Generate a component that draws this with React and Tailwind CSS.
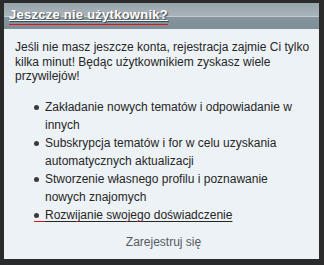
import React from 'react';

const perks = [
    'Zakładanie nowych tematów i odpowiadanie w innych',
    'Subskrypcja tematów i for w celu uzyskania automatycznych aktualizacji',
    'Stworzenie własnego profilu i poznawanie nowych znajomych',
];

const Bullet = () => (
    <span className="mt-[7px] mr-[6px] w-[5px] h-[5px] rounded-full bg-[#3a3a3a] shrink-0" />
);

export default function App() {
    return (
        <div className="w-[324px] h-[265px] bg-[#2b2b2b] pt-[3px] pl-[4px] pr-[5px] pb-[6px] font-['Liberation_Sans',Arial,sans-serif]">
            <div className="h-full flex flex-col bg-[#edf2f6]">
                <div className="h-[26px] flex flex-col shrink-0">
                    <div className="h-[13px] bg-gradient-to-b from-[#97a3ab] to-[#a9b3ba]" />
                    <div className="h-px bg-[#c3cbd0]" />
                    <div className="flex-1 bg-gradient-to-b from-[#84959d] to-[#7d8e96]" />
                </div>
                <div className="-mt-[24px] h-[24px] pl-[5px] flex items-start">
                    <span className="mt-[2px] pb-px border-b border-[#e0141e] text-[13px] font-bold tracking-[0.25px] leading-[16px] text-white underline decoration-white underline-offset-[1px] [text-shadow:1px_1px_1px_#3b4a52]">
                        Jeszcze nie użytkownik?
                    </span>
                </div>

                <div className="pt-[11px] pl-[11px] pr-[7px] text-[12px] text-[#262626]">
                    <p className="leading-[14.5px]">
                        Jeśli nie masz jeszcze konta, rejestracja zajmie Ci tylko kilka minut! Będąc użytkownikiem zyskasz wiele przywilejów!
                    </p>

                    <ul className="mt-[14px] pl-[19px] pr-[2px] leading-[18px]">
                        {perks.map((p) => (
                            <li key={p} className="flex items-start">
                                <Bullet />
                                <span>{p}</span>
                            </li>
                        ))}
                        <li className="flex">
                            <span className="flex items-start border-b border-[#e0141e] h-[16px]">
                                <Bullet />
                                <span className="underline underline-offset-[2px] leading-[16px] mt-px">Rozwijanie swojego doświadczenie</span>
                            </span>
                        </li>
                    </ul>

                    <div className="mt-[13px] text-center leading-[14.5px] text-[#555a5e]">Zarejestruj się</div>
                </div>
            </div>
        </div>
    );
}
